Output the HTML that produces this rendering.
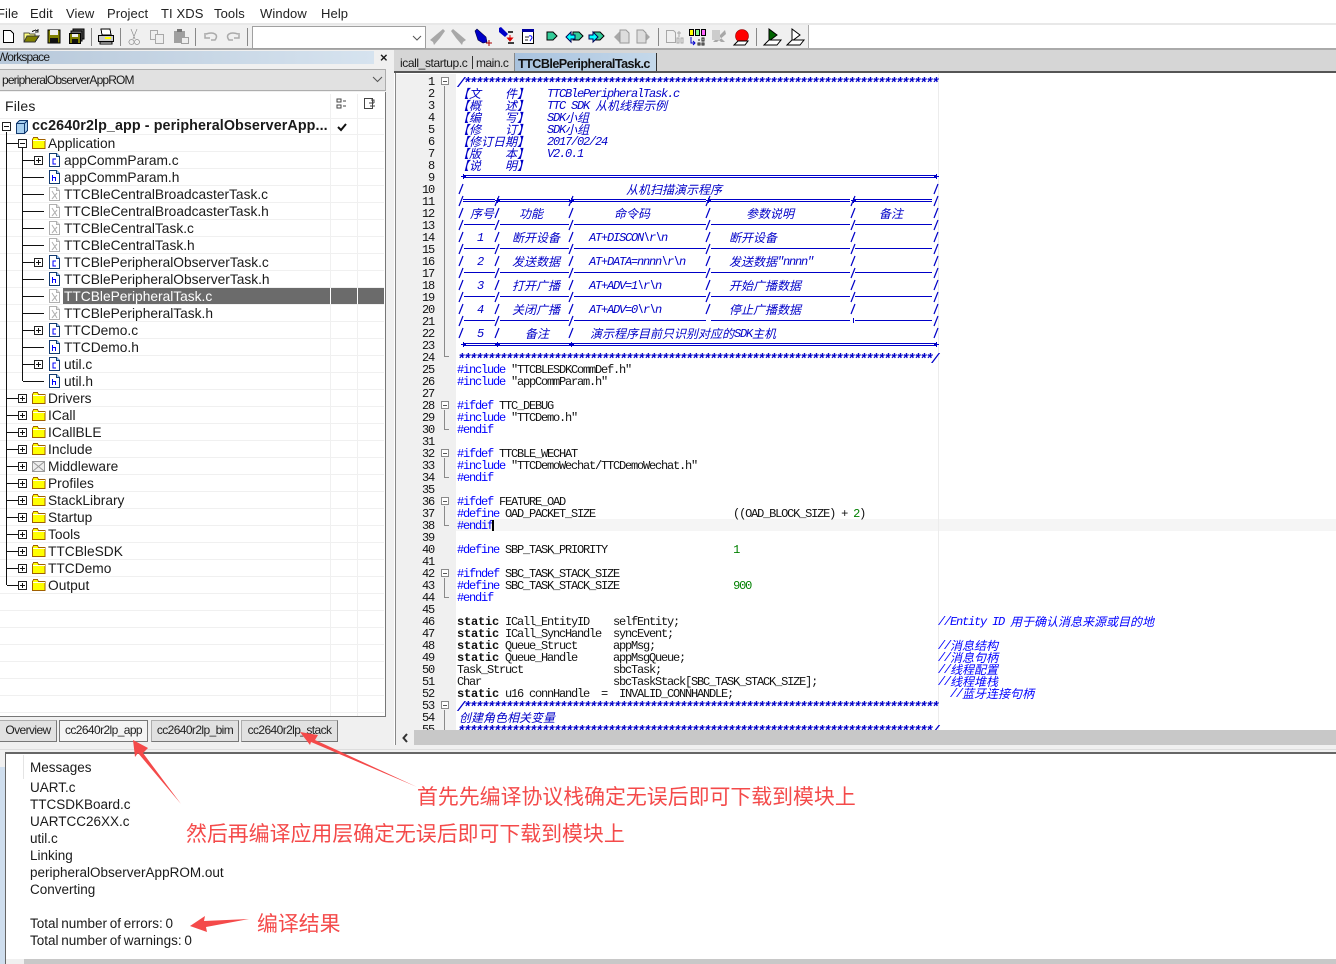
<!DOCTYPE html>
<html><head><meta charset="utf-8"><title>IAR</title>
<style>
html,body{margin:0;padding:0;background:#fff}
#r{position:relative;width:1336px;height:964px;overflow:hidden;background:#fff;font-family:"Liberation Sans",sans-serif;color:#000}
#r div{position:absolute}
.m{position:absolute;top:6px;font-size:13px;line-height:15px;letter-spacing:.1px;color:#222}
.t{position:absolute;font-size:13.750px;line-height:17px;white-space:nowrap;color:#1a1a1a}
.c{font-size:13.500px;word-spacing:-1px}
.h{font-size:12px;letter-spacing:-.85px}
#ed{left:396px;top:76px;width:940px;height:654px;overflow:hidden}
#ed p{position:absolute;margin:0;left:61px;height:12px;line-height:12px;font-family:"Liberation Mono",monospace;font-size:12px;letter-spacing:-1.2px;white-space:pre;color:#111}
#ed p.k{color:#0000c8;font-style:italic;font-weight:bold}
#ed p.s{font-size:14px;letter-spacing:-2.4px;line-height:16px}
#ed p.n{left:0;width:38px;text-align:right;color:#111}
#ed em{font-style:normal;color:#00f}
#ed b{font-weight:bold;letter-spacing:-.2px}
#ed i{font-style:normal;color:#008000}
#ed span{position:absolute;top:0;font-family:"WenQuanYi Zen Hei","Noto Sans CJK SC",sans-serif;font-style:italic;font-weight:normal;letter-spacing:0;font-size:12px;line-height:12px;color:#0000c8;white-space:pre}
#ed span.l{font-family:"Liberation Mono",monospace;letter-spacing:-1.2px}
#ed span.g{color:#00f}
.x{position:absolute;font-family:"Noto Sans CJK SC",sans-serif;font-size:20.900px;line-height:26px;color:#f44a4a;white-space:nowrap}
.tb{position:absolute;top:720px;height:20px;background:#e1e1e1;border:1px solid #adadad;border-right-color:#777;border-bottom-color:#777;font-size:12px;line-height:18px;text-align:center;color:#222;box-sizing:content-box;letter-spacing:-.6px}
</style></head><body><div id="r">

<span class="m" style="left:-3px">File</span><span class="m" style="left:30px">Edit</span><span class="m" style="left:66px">View</span><span class="m" style="left:107px">Project</span><span class="m" style="left:161px">TI XDS</span><span class="m" style="left:214px">Tools</span><span class="m" style="left:260px">Window</span><span class="m" style="left:321px">Help</span>

<div style="left:0;top:23px;width:1336px;height:2px;background:#e8e8e8"></div>
<div style="left:0;top:25px;width:808px;height:23px;background:#f0f0f0;border-right:1px solid #aaa"></div>
<div style="left:0;top:48px;width:1336px;height:2px;background:#aaa"></div>
<div style="left:252px;top:26px;width:172px;height:21px;background:#fff;border:1px solid #a0a0a0"></div>

<svg style="position:absolute;left:0;top:0" width="1336" height="50" viewBox="0 0 1336 50" shape-rendering="crispEdges">
<g fill="none" stroke="#888"><path d="M91.500 28V46M120.500 28V46M195.500 28V46M247.500 28V46M658.500 28V46M756.500 28V46"/></g>
<!-- new -->
<path d="M3.500 30.500H10.500L13.500 33.500V42.500H3.500Z" fill="#fff" stroke="#000"/>
<!-- open -->
<path d="M24 33h5l1 1h5v8H24Z" fill="#ffff80" stroke="#554"/><path d="M24 42l3-6h12l-4 6Z" fill="#808000" stroke="#333"/><path d="M32 32q3-3 6-1M38 29v3h-3" stroke="#222" fill="none"/>
<!-- save -->
<path d="M48 30h12v13H48Z" fill="#808000" stroke="#000"/><path d="M50 30h8v5h-8Z" fill="#eee"/><path d="M50 38h8v5h-8Z" fill="#111"/>
<!-- save all -->
<path d="M73 29h11v10H73Z" fill="#555" stroke="#000"/><path d="M71 31h11v10H71Z" fill="#666" stroke="#000"/><path d="M69.500 33.500h11v10h-11Z" fill="#808000" stroke="#000"/><path d="M72 34h6v3h-6Z" fill="#eee"/><path d="M72 39h6v4h-6Z" fill="#111"/>
<!-- print -->
<path d="M101 29h9l1 6h-9Z" fill="#fff" stroke="#000"/><path d="M98.500 35.500h15v6h-15Z" fill="#ccc" stroke="#000"/><path d="M100 42h12v2h-12Z" fill="#fff" stroke="#000"/><path d="M105 37h6v2h-6Z" fill="#ff0"/>
<!-- cut -->
<g stroke="#a8a8a8" fill="none"><path d="M131 29l4 10M137 29l-4 10"/><circle cx="131.500" cy="42" r="2.500"/><circle cx="137" cy="42" r="2.500"/></g>
<!-- copy -->
<g stroke="#a8a8a8" fill="#eee"><path d="M150.500 30.500h7v9h-7Z"/><path d="M155.500 34.500h8v9h-8Z"/></g>
<!-- paste -->
<path d="M174 31h11v12h-11Z" fill="#a0a0a0"/><path d="M177 29h5v3h-5Z" fill="#777"/><path d="M181.500 37.500h7v6h-7Z" fill="#eee" stroke="#a0a0a0"/>
<!-- undo redo -->
<g fill="none" stroke="#aaa" stroke-width="1.500" shape-rendering="auto"><path d="M206 34q6-2 9 0t0 6h-4M205 33v5h5"/><path d="M238 34q-6-2-9 0t0 6h4M239 33v5h-5"/></g>
<!-- combo arrow -->
<path d="M413 36l4 4 4-4" fill="none" stroke="#555" shape-rendering="auto"/>
<g shape-rendering="auto">
<!-- dim marks -->
<g fill="#a8a8a8"><path d="M430 40l7-6 6-5 2 2-5 7-6 7-1-3-3-2Z"/><path d="M466 40l-7-6-6-5-2 2 5 7 6 7 1-3 3-2Z"/></g>
<!-- blue marks -->
<path d="M475 31l2-2 9 8 1 5-4 1-5-3-2-6Z" fill="#0000c8" stroke="#004" stroke-width=".6"/><path d="M486 43h6M489 40v6" stroke="#a00" stroke-width="1"/>
<path d="M499 28l2-1 7 7-3 3-6-5Z" fill="#0000c8"/><path d="M508 32h5M508 43h6" stroke="#000" stroke-width="1.600"/><path d="M510 35v5M507.500 38l2.500 3 2.500-3Z" stroke="#d00" fill="#d00"/>
<!-- bookmark doc -->
<path d="M522.500 29.500h11v14h-11Z" fill="#fff" stroke="#000"/><path d="M522 29h12v3h-12Z" fill="#0000a0"/><path d="M525 37h4M525 40h3" stroke="#222"/><path d="M529 36q3-1 3 2l-2 3" fill="none" stroke="#00f"/>
<!-- tag arrows -->
<path d="M547 32h6l4 4-4 4h-6Z" fill="#3c9" stroke="#000"/>
<path d="M573 32h6l4 4-4 4h-6Z" fill="#3c9" stroke="#000"/><path d="M566 37l5-5v3h4v4h-4v3Z" fill="#0ff" stroke="#005"/>
<path d="M594 32h6l4 4-4 4h-6Z" fill="#3c9" stroke="#000"/><path d="M598 37l-5-5v3h-4v4h4v3Z" fill="#0ff" stroke="#005"/>
<!-- dim tag -->
<g fill="#a8a8a8"><path d="M614 37l6-6v12Z"/><path d="M620 30h6l3 3v10h-9Z" stroke="#999" fill="#ddd"/><path d="M650 37l-6-6v12Z"/><path d="M637 30h6l3 3v10h-9Z" stroke="#999" fill="#ddd"/></g>
<!-- build icons -->
<g fill="none" stroke="#a8a8a8"><path d="M666.500 30.500h7l2 2v10h-9Z"/><path d="M677 33h4M679 31v6M677 38h2v5h-2ZM681 38h2v5h-2Z"/></g>
<path d="M689.500 29.500h4v6h-4Z" fill="#ff0" stroke="#000"/><path d="M695.500 29.500h4v6h-4Z" fill="#8f8" stroke="#000"/><path d="M701.500 29.500h4v6h-4Z" fill="#f6f" stroke="#000"/><path d="M691 37v6h4M693 41l2 2-2 2" stroke="#00c" fill="none"/><path d="M698 40h2M702 38h2v3h-2ZM698 43h2v2h-2ZM702 43h2v2h-2Z" stroke="#222" fill="none"/>
<g fill="#a8a8a8"><path d="M713 30l12 12h-4l-9-8ZM725 30l-12 12h4l9-8Z"/><path d="M712 30h8v10h-8Z" fill="#ccc"/></g>
<circle cx="742" cy="36" r="6.500" fill="#f00" stroke="#800" stroke-width=".6"/><path d="M734 45l4-4h10l-3 4Z" fill="#fff" stroke="#000"/>
<path d="M769 29v12l8-6Z" fill="#006400" stroke="#000"/><path d="M764 45l5-5h9l3 0-4 5Z" fill="#fff" stroke="#000"/>
<path d="M792 29v12l8-6Z" fill="#fff" stroke="#000"/><path d="M787 45l5-5h9l3 0-4 5Z" fill="#fff" stroke="#000"/>
</g>
</svg>

<!-- workspace -->
<div style="left:0;top:50px;width:394px;height:703px;background:#f0f0f0"></div>
<div style="left:0;top:51px;width:374px;height:13px;background:linear-gradient(90deg,#b7c8da,#d6e3ef)"></div>
<span class="t h" style="left:-3px;top:49px">Workspace</span>
<span class="t" style="left:380px;top:49px;font-size:13px;font-weight:bold">×</span>
<div style="left:0;top:69px;width:385px;height:20px;background:#e1e1e1;border:1px solid #adadad;border-left:0"></div>
<span class="t h" style="left:2px;top:72px">peripheralObserverAppROM</span>
<svg style="position:absolute;left:372px;top:76px" width="12" height="8"><path d="M1 1l4.500 4.500L10 1" fill="none" stroke="#555"/></svg>
<div style="left:0;top:92px;width:385px;height:624px;background:#fff;border-right:1px solid #777;border-bottom:1px solid #777"></div>

<svg style="position:absolute;left:0;top:90px" width="386" height="628" viewBox="0 90 386 628" shape-rendering="crispEdges">
<defs>
<symbol id="fo" width="16" height="14" viewBox="0 0 16 14"><path d="M1.500 3.500l1-2h4l1 2h6.500v9H1.500Z" fill="#ff0" stroke="#a06000"/><path d="M2 4h12v1H2Z" fill="#ffe"/></symbol>
<symbol id="mw" width="16" height="14" viewBox="0 0 16 14"><path d="M1.500 2.500h12v10h-12Z" fill="#eee" stroke="#999"/><path d="M2 3l11 9M13 3L2 12" stroke="#999" shape-rendering="auto"/></symbol>
<symbol id="fc" width="12" height="14" viewBox="0 0 12 14"><path d="M.5.5h7l3 3v10H.500Z" fill="#fff" stroke="#123a70"/><path d="M7.500.5v3h3" fill="#9cf" stroke="#123a70"/><path d="M7 6H4v5h3" fill="none" stroke="#00f"/></symbol>
<symbol id="fh" width="12" height="14" viewBox="0 0 12 14"><path d="M.5.5h7l3 3v10H.500Z" fill="#fff" stroke="#123a70"/><path d="M7.500.5v3h3" fill="#9cf" stroke="#123a70"/><path d="M3.500 5v6M3.500 7.500h3v3.500" fill="none" stroke="#00f"/></symbol>
<symbol id="fx" width="12" height="14" viewBox="0 0 12 14"><path d="M.5.5h7l3 3v10H.500Z" fill="#fff" stroke="#b0b0b0"/><path d="M7.500.5v3h3" fill="#ddd" stroke="#b0b0b0"/><path d="M3 4l5 8M8 6l-5 6" stroke="#b0b0b0" fill="none" shape-rendering="auto"/></symbol>
<symbol id="pl" width="9" height="9" viewBox="0 0 9 9"><path d="M.5.5h8v8h-8Z" fill="#fff" stroke="#222"/><path d="M2 4.500h5M4.500 2v5" stroke="#111"/></symbol>
<symbol id="mi" width="9" height="9" viewBox="0 0 9 9"><path d="M.5.5h8v8h-8Z" fill="#fff" stroke="#222"/><path d="M2 4.500h5" stroke="#111"/></symbol>
</defs>
<!-- grid -->
<g stroke="#f0f0f0"><path d="M0 118.500H384M0 134.500H384M0 151.500H384M0 168.500H384M0 185.500H384M0 202.500H384M0 219.500H384M0 236.500H384M0 253.500H384M0 270.500H384M0 287.500H384M0 304.500H384M0 321.500H384M0 338.500H384M0 355.500H384M0 372.500H384M0 389.500H384M0 406.500H384M0 423.500H384M0 440.500H384M0 457.500H384M0 474.500H384M0 491.500H384M0 508.500H384M0 525.500H384M0 542.500H384M0 559.500H384M0 576.500H384M0 593.500H384M0 610.500H384M0 627.500H384M0 644.500H384M0 661.500H384M0 678.500H384M0 695.500H384M0 712.500H384"/><path d="M330.500 94V716M357.500 94V716"/></g>
<rect x="63" y="288" width="321" height="16" fill="#6b6b6b"/><path d="M330.500 288v16M357.500 288v16" stroke="#fff"/>
<!-- lines -->
<g stroke="#111">
<path d="M6.500 132V585M22.500 148V381"/>
<path d="M7 143.500H18M7 398.500H18M7 415.500H18M7 432.500H18M7 449.500H18M7 466.500H18M7 483.500H18M7 500.500H18M7 517.500H18M7 534.500H18M7 551.500H18M7 568.500H18M7 585.500H18"/>
<path d="M23 160.500H34M23 177.500H44M23 194.500H44M23 211.500H44M23 228.500H44M23 245.500H44M23 262.500H34M23 279.500H44M23 296.500H44M23 313.500H44M23 330.500H34M23 347.500H44M23 364.500H34M23 381.500H44"/>
</g>
<use href="#mi" x="2" y="122"/>
<path d="M16.500 123.500l3-3h8v10l-3 3h-8Z" fill="#a8d0f0" stroke="#123a70"/><path d="M16.500 123.500h8v10M24.500 123.500l3-3" fill="none" stroke="#123a70"/>
<use href="#mi" x="18" y="139"/><use href="#fo" x="31" y="136"/>
<use href="#pl" x="34" y="156"/><use href="#fc" x="49" y="153"/>
<use href="#fh" x="49" y="170"/><use href="#fx" x="49" y="187"/><use href="#fx" x="49" y="204"/><use href="#fx" x="49" y="221"/><use href="#fx" x="49" y="238"/>
<use href="#pl" x="34" y="258"/><use href="#fc" x="49" y="255"/><use href="#fh" x="49" y="272"/><use href="#fx" x="49" y="289"/><use href="#fx" x="49" y="306"/>
<use href="#pl" x="34" y="326"/><use href="#fc" x="49" y="323"/><use href="#fh" x="49" y="340"/>
<use href="#pl" x="34" y="360"/><use href="#fc" x="49" y="357"/><use href="#fh" x="49" y="374"/>
<use href="#pl" x="18" y="394"/><use href="#fo" x="31" y="391"/>
<use href="#pl" x="18" y="411"/><use href="#fo" x="31" y="408"/>
<use href="#pl" x="18" y="428"/><use href="#fo" x="31" y="425"/>
<use href="#pl" x="18" y="445"/><use href="#fo" x="31" y="442"/>
<use href="#pl" x="18" y="462"/><use href="#mw" x="31" y="459"/>
<use href="#pl" x="18" y="479"/><use href="#fo" x="31" y="476"/>
<use href="#pl" x="18" y="496"/><use href="#fo" x="31" y="493"/>
<use href="#pl" x="18" y="513"/><use href="#fo" x="31" y="510"/>
<use href="#pl" x="18" y="530"/><use href="#fo" x="31" y="527"/>
<use href="#pl" x="18" y="547"/><use href="#fo" x="31" y="544"/>
<use href="#pl" x="18" y="564"/><use href="#fo" x="31" y="561"/>
<use href="#pl" x="18" y="581"/><use href="#fo" x="31" y="578"/>
<!-- header icons -->
<g stroke="#444" fill="none"><path d="M337 99h4v3h-4ZM337 105h4v3h-4ZM343 101h3M343 106h3"/><path d="M364.500 98.500h8v10h-8Z"/><path d="M369 103h5M371 100h3v3M370 106h2M373 106h2"/></g>
<path d="M338 127l3 3 5-6" fill="none" stroke="#111" stroke-width="2" shape-rendering="auto"/>
</svg>

<span class="t" style="left:5px;top:98px;font-size:14px;letter-spacing:.2px">Files</span>
<span class="t" style="left:32px;top:118px;font-size:14.300px;font-weight:bold;letter-spacing:.1px">cc2640r2lp_app - peripheralObserverApp...</span>
<span class="t" style="left:48px;top:135px">Application</span>
<span class="t" style="left:64px;top:152px">appCommParam.c</span>
<span class="t" style="left:64px;top:169px">appCommParam.h</span>
<span class="t" style="left:64px;top:186px">TTCBleCentralBroadcasterTask.c</span>
<span class="t" style="left:64px;top:203px">TTCBleCentralBroadcasterTask.h</span>
<span class="t" style="left:64px;top:220px">TTCBleCentralTask.c</span>
<span class="t" style="left:64px;top:237px">TTCBleCentralTask.h</span>
<span class="t" style="left:64px;top:254px">TTCBlePeripheralObserverTask.c</span>
<span class="t" style="left:64px;top:271px">TTCBlePeripheralObserverTask.h</span>
<span class="t" style="left:64px;top:288px;color:#fff">TTCBlePeripheralTask.c</span>
<span class="t" style="left:64px;top:305px">TTCBlePeripheralTask.h</span>
<span class="t" style="left:64px;top:322px">TTCDemo.c</span>
<span class="t" style="left:64px;top:339px">TTCDemo.h</span>
<span class="t" style="left:64px;top:356px">util.c</span>
<span class="t" style="left:64px;top:373px">util.h</span>
<span class="t" style="left:48px;top:390px">Drivers</span>
<span class="t" style="left:48px;top:407px">ICall</span>
<span class="t" style="left:48px;top:424px">ICallBLE</span>
<span class="t" style="left:48px;top:441px">Include</span>
<span class="t" style="left:48px;top:458px">Middleware</span>
<span class="t" style="left:48px;top:475px">Profiles</span>
<span class="t" style="left:48px;top:492px">StackLibrary</span>
<span class="t" style="left:48px;top:509px">Startup</span>
<span class="t" style="left:48px;top:526px">Tools</span>
<span class="t" style="left:48px;top:543px">TTCBleSDK</span>
<span class="t" style="left:48px;top:560px">TTCDemo</span>
<span class="t" style="left:48px;top:577px">Output</span>

<!-- bottom tabs -->
<div class="tb" style="left:-1px;width:56px">Overview</div>
<div class="tb" style="left:59px;width:87px;background:#f4f4f4;border-color:#777">cc2640r2lp_app</div>
<div class="tb" style="left:151px;width:86px">cc2640r2lp_bim</div>
<div class="tb" style="left:241px;width:95px">cc2640r2lp_stack</div>

<!-- right pane -->
<div style="left:394px;top:50px;width:942px;height:22px;background:#d6d6d6"></div>
<div style="left:394px;top:71px;width:942px;height:2px;background:#555"></div>
<div style="left:514px;top:53px;width:141px;height:18px;background:linear-gradient(90deg,#a8c2de,#c4d8ea);border-right:1px solid #333;border-left:1px solid #888"></div>
<span class="t" style="left:400px;top:55px;font-size:12px;letter-spacing:-.4px">icall_startup.c</span>
<div style="left:472px;top:56px;width:1px;height:13px;background:#333"></div>
<span class="t" style="left:476px;top:55px;font-size:12px;letter-spacing:-.5px">main.c</span>
<span class="t" style="left:518px;top:56px;font-size:12.600px;font-weight:bold;letter-spacing:-.55px;color:#111">TTCBlePeripheralTask.c</span>
<div style="left:395px;top:73px;width:1px;height:672px;background:#888"></div>
<div style="left:396px;top:74px;width:60px;height:656px;background:#f0f0f0"></div>
<div style="left:456px;top:519px;width:880px;height:12px;background:#f5f5f5"></div>
<div style="left:938px;top:74px;width:1px;height:656px;background:#ececec"></div>

<svg style="position:absolute;left:396px;top:74px" width="62" height="656" viewBox="396 74 62 656" shape-rendering="crispEdges">
<g stroke="#8a8a8a" fill="none">
<path d="M444.500 86V356.500H449"/><path d="M444.500 410V429.500H449"/><path d="M444.500 458V477.500H449"/><path d="M444.500 506V525.500H449"/><path d="M444.500 578V597.500H449"/><path d="M444.500 710V730"/>
</g>
<g stroke="#8a8a8a" fill="#fff"><path d="M441.500 77.500h7v7h-7Z"/><path d="M441.500 401.500h7v7h-7Z"/><path d="M441.500 449.500h7v7h-7Z"/><path d="M441.500 497.500h7v7h-7Z"/><path d="M441.500 569.500h7v7h-7Z"/><path d="M441.500 701.500h7v7h-7Z"/></g>
<g stroke="#555"><path d="M443 81.500h4M443 405.500h4M443 453.500h4M443 501.500h4M443 573.500h4M443 705.500h4"/></g>
</svg>

<div id="ed">
<p class="n" style="top:0">1</p><p class="n" style="top:12px">2</p><p class="n" style="top:24px">3</p><p class="n" style="top:36px">4</p><p class="n" style="top:48px">5</p><p class="n" style="top:60px">6</p><p class="n" style="top:72px">7</p><p class="n" style="top:84px">8</p><p class="n" style="top:96px">9</p><p class="n" style="top:108px">10</p><p class="n" style="top:120px">11</p><p class="n" style="top:132px">12</p><p class="n" style="top:144px">13</p><p class="n" style="top:156px">14</p><p class="n" style="top:168px">15</p><p class="n" style="top:180px">16</p><p class="n" style="top:192px">17</p><p class="n" style="top:204px">18</p><p class="n" style="top:216px">19</p><p class="n" style="top:228px">20</p><p class="n" style="top:240px">21</p><p class="n" style="top:252px">22</p><p class="n" style="top:264px">23</p><p class="n" style="top:276px">24</p><p class="n" style="top:288px">25</p><p class="n" style="top:300px">26</p><p class="n" style="top:312px">27</p><p class="n" style="top:324px">28</p><p class="n" style="top:336px">29</p><p class="n" style="top:348px">30</p><p class="n" style="top:360px">31</p><p class="n" style="top:372px">32</p><p class="n" style="top:384px">33</p><p class="n" style="top:396px">34</p><p class="n" style="top:408px">35</p><p class="n" style="top:420px">36</p><p class="n" style="top:432px">37</p><p class="n" style="top:444px">38</p><p class="n" style="top:456px">39</p><p class="n" style="top:468px">40</p><p class="n" style="top:480px">41</p><p class="n" style="top:492px">42</p><p class="n" style="top:504px">43</p><p class="n" style="top:516px">44</p><p class="n" style="top:528px">45</p><p class="n" style="top:540px">46</p><p class="n" style="top:552px">47</p><p class="n" style="top:564px">48</p><p class="n" style="top:576px">49</p><p class="n" style="top:588px">50</p><p class="n" style="top:600px">51</p><p class="n" style="top:612px">52</p><p class="n" style="top:624px">53</p><p class="n" style="top:636px">54</p><p class="n" style="top:648px">55</p>

<p class="k s" style="top:0">/*******************************************************************************</p>
<p class="k" style="top:12px"><span>【文&#12288;&#12288;件】</span><span class="l" style="left:90px">TTCBlePeripheralTask.c</span></p>
<p class="k" style="top:24px"><span>【概&#12288;&#12288;述】</span><span class="l" style="left:90px">TTC SDK</span><span style="left:138px">从机线程示例</span></p>
<p class="k" style="top:36px"><span>【编&#12288;&#12288;写】</span><span class="l" style="left:90px">SDK</span><span style="left:108px">小组</span></p>
<p class="k" style="top:48px"><span>【修&#12288;&#12288;订】</span><span class="l" style="left:90px">SDK</span><span style="left:108px">小组</span></p>
<p class="k" style="top:60px"><span>【修订日期】</span><span class="l" style="left:90px">2017/02/24</span></p>
<p class="k" style="top:72px"><span>【版&#12288;&#12288;本】</span><span class="l" style="left:90px">V2.0.1</span></p>
<p class="k" style="top:84px"><span>【说&#12288;&#12288;明】</span></p>
<p class="k" style="top:108px"><span style="left:169px">从机扫描演示程序</span></p>
<p class="k" style="top:132px"><span style="left:13px">序号</span><span style="left:62px">功能</span><span style="left:157px">命令码</span><span style="left:289px">参数说明</span><span style="left:422px">备注</span></p>
<p class="k" style="top:156px"><span class="l" style="left:20px">1</span><span style="left:55px">断开设备</span><span class="l" style="left:132px">AT+DISCON\r\n</span><span style="left:272px">断开设备</span></p>
<p class="k" style="top:180px"><span class="l" style="left:20px">2</span><span style="left:55px">发送数据</span><span class="l" style="left:132px">AT+DATA=nnnn\r\n</span><span style="left:272px">发送数据</span><span class="l" style="left:320px">"nnnn"</span></p>
<p class="k" style="top:204px"><span class="l" style="left:20px">3</span><span style="left:55px">打开广播</span><span class="l" style="left:132px">AT+ADV=1\r\n</span><span style="left:272px">开始广播数据</span></p>
<p class="k" style="top:228px"><span class="l" style="left:20px">4</span><span style="left:55px">关闭广播</span><span class="l" style="left:132px">AT+ADV=0\r\n</span><span style="left:272px">停止广播数据</span></p>
<p class="k" style="top:252px"><span class="l" style="left:20px">5</span><span style="left:68px">备注</span><span style="left:133px">演示程序目前只识别对应的</span><span class="l" style="left:277px">SDK</span><span style="left:295px">主机</span></p>
<p class="k s" style="top:276px">*******************************************************************************/</p>
<p style="top:288px"><em>#include</em> "TTCBLESDKCommDef.h"</p>
<p style="top:300px"><em>#include</em> "appCommParam.h"</p>
<p style="top:324px"><em>#ifdef</em> TTC_DEBUG</p>
<p style="top:336px"><em>#include</em> "TTCDemo.h"</p>
<p style="top:348px"><em>#endif</em></p>
<p style="top:372px"><em>#ifdef</em> TTCBLE_WECHAT</p>
<p style="top:384px"><em>#include</em> "TTCDemoWechat/TTCDemoWechat.h"</p>
<p style="top:396px"><em>#endif</em></p>
<p style="top:420px"><em>#ifdef</em> FEATURE_OAD</p>
<p style="top:432px"><em>#define</em> OAD_PACKET_SIZE                       ((OAD_BLOCK_SIZE) + <i>2</i>)</p>
<p style="top:444px"><em>#endif</em></p>
<p style="top:468px"><em>#define</em> SBP_TASK_PRIORITY                     <i>1</i></p>
<p style="top:492px"><em>#ifndef</em> SBC_TASK_STACK_SIZE</p>
<p style="top:504px"><em>#define</em> SBC_TASK_STACK_SIZE                   <i>900</i></p>
<p style="top:516px"><em>#endif</em></p>
<p style="top:540px"><b>static</b> ICall_EntityID    selfEntity;<span class="l g" style="left:481px">//Entity ID</span><span class="g" style="left:553px">用于确认消息来源或目的地</span></p>
<p style="top:552px"><b>static</b> ICall_SyncHandle  syncEvent;</p>
<p style="top:564px"><b>static</b> Queue_Struct      appMsg;<span class="l g" style="left:481px">//</span><span class="g" style="left:493px">消息结构</span></p>
<p style="top:576px"><b>static</b> Queue_Handle      appMsgQueue;<span class="l g" style="left:481px">//</span><span class="g" style="left:493px">消息句柄</span></p>
<p style="top:588px">Task_Struct               sbcTask;<span class="l g" style="left:481px">//</span><span class="g" style="left:493px">线程配置</span></p>
<p style="top:600px">Char                      sbcTaskStack[SBC_TASK_STACK_SIZE];<span class="l g" style="left:481px">//</span><span class="g" style="left:493px">线程堆栈</span></p>
<p style="top:612px"><b>static</b> u16 connHandle  =  INVALID_CONNHANDLE;<span class="l g" style="left:493px">//</span><span class="g" style="left:505px">蓝牙连接句柄</span></p>
<p class="k s" style="top:624px">/*******************************************************************************</p>
<p class="k" style="top:636px"><span style="left:2px">创建角色相关变量</span></p>
<p class="k s" style="top:648px">*******************************************************************************/</p>
</div>
<div style="left:492px;top:520px;width:2px;height:11px;background:#000"></div>

<!-- comment box table -->
<svg style="position:absolute;left:456px;top:170px" width="486" height="182" viewBox="456 170 486 182" shape-rendering="crispEdges">
<g stroke="#0000c8" fill="none">
<path d="M463 175.500H936M463 177.500H936M463 343.500H936M463 345.500H936"/>
<path d="M463 199.500H495M463 201.500H495M498 199.500H570M498 201.500H570M572 199.500H706M572 201.500H706M709 199.500H850M709 201.500H850M854 199.500H932M854 201.500H932"/>
<path d="M464 224.500H495M500 224.500H569M574 224.500H706M711 224.500H850M855 224.500H932"/>
<path d="M464 248.500H495M500 248.500H569M574 248.500H706M711 248.500H850M855 248.500H932"/>
<path d="M464 272.500H495M500 272.500H569M574 272.500H706M711 272.500H850M855 272.500H932"/>
<path d="M464 296.500H495M500 296.500H569M574 296.500H706M711 296.500H850M855 296.500H932"/>
<path d="M464 320.500H495M500 320.500H569M574 320.500H706M711 320.500H850M855 320.500H932"/>
<!-- junction crosses -->
<path d="M463.500 174v5M936.500 174v5M461 176.500h5M934 176.500h5M463.500 342v5M936.500 342v5M461 344.500h5M934 344.500h5"/>
<path d="M497.500 198v5M571.500 198v5M708.500 198v5M853.500 198v5M495 200.500h5M569 200.500h5M706 200.500h5M851 200.500h5"/>
<path d="M497.500 342v5M571.500 342v5M495 344.500h5M569 344.500h5M853.500 318v5"/>
</g>
<g stroke="#0000c8" fill="none" stroke-width="1.200" shape-rendering="auto">
<path d="M459 194l4-10m-4 22l4-10m-4 22l4-10m-4 22l4-10m-4 22l4-10m-4 22l4-10m-4 22l4-10m-4 22l4-10m-4 22l4-10m-4 22l4-10m-4 22l4-10m-4 22l4-10m-4 22l4-10"/>
<path d="M934 194l4-10m-4 22l4-10m-4 22l4-10m-4 22l4-10m-4 22l4-10m-4 22l4-10m-4 22l4-10m-4 22l4-10m-4 22l4-10m-4 22l4-10m-4 22l4-10m-4 22l4-10m-4 22l4-10"/>
<path d="M495 206l4-10m-4 22l4-10m-4 22l4-10m-4 22l4-10m-4 22l4-10m-4 22l4-10m-4 22l4-10m-4 22l4-10m-4 22l4-10m-4 22l4-10m-4 22l4-10m-4 22l4-10"/>
<path d="M569 206l4-10m-4 22l4-10m-4 22l4-10m-4 22l4-10m-4 22l4-10m-4 22l4-10m-4 22l4-10m-4 22l4-10m-4 22l4-10m-4 22l4-10m-4 22l4-10m-4 22l4-10"/>
<path d="M706 206l4-10m-4 22l4-10m-4 22l4-10m-4 22l4-10m-4 22l4-10m-4 22l4-10m-4 22l4-10m-4 22l4-10m-4 22l4-10m-4 22l4-10"/>
<path d="M851 206l4-10m-4 22l4-10m-4 22l4-10m-4 22l4-10m-4 22l4-10m-4 22l4-10m-4 22l4-10m-4 22l4-10m-4 22l4-10m-4 22l4-10"/>
</g>
</svg>

<!-- h scrollbar -->
<div style="left:396px;top:730px;width:940px;height:15px;background:#f0f0f0"></div>
<div style="left:414px;top:730px;width:922px;height:15px;background:#c8c8c8"></div>
<svg style="position:absolute;left:401px;top:733px" width="10" height="10"><path d="M6 1L2.500 5 6 9" fill="none" stroke="#333" stroke-width="2"/></svg>
<div style="left:394px;top:745px;width:942px;height:8px;background:#f0f0f0"></div>
<div style="left:0;top:749px;width:1336px;height:1px;background:#ddd"></div>
<div style="left:5px;top:752px;width:1331px;height:2px;background:#666"></div>

<!-- messages -->
<div style="left:0;top:752px;width:5px;height:15px;background:#f0f0f0"></div>
<div style="left:0;top:767px;width:5px;height:197px;background:#cfdeee"></div>
<div style="left:5px;top:754px;width:1px;height:210px;background:#666"></div>
<div style="left:23px;top:755px;width:1px;height:24px;background:#e4e4e4"></div>
<span class="t c" style="left:30px;top:759px">Messages</span>
<span class="t c" style="left:30px;top:779px">UART.c</span>
<span class="t c" style="left:30px;top:796px">TTCSDKBoard.c</span>
<span class="t c" style="left:30px;top:813px">UARTCC26XX.c</span>
<span class="t c" style="left:30px;top:830px">util.c</span>
<span class="t c" style="left:30px;top:847px">Linking</span>
<span class="t c" style="left:30px;top:864px">peripheralObserverAppROM.out</span>
<span class="t c" style="left:30px;top:881px">Converting</span>
<span class="t c" style="left:30px;top:915px">Total number of errors: 0</span>
<span class="t c" style="left:30px;top:932px">Total number of warnings: 0</span>
<div style="left:6px;top:959px;width:18px;height:5px;background:#f0f0f0"></div>
<div style="left:24px;top:959px;width:1312px;height:5px;background:#c8c8c8"></div>

<!-- annotations -->
<svg style="position:absolute;left:0;top:720px" width="450" height="230" viewBox="0 720 450 230">
<g fill="#f44a4a">
<path d="M133 740L148 748L143 753L181 804L138 753L135 757Z"/>
<path d="M300 732L318 735L315 740L417 787L311 742L310 745Z"/>
<path d="M190 926L205 916L204 921L249 919L206 927L207 932Z"/>
</g>
</svg>
<span class="x" style="left:417px;top:783px">首先先编译协议栈确定无误后即可下载到模块上</span>
<span class="x" style="left:186px;top:820px">然后再编译应用层确定无误后即可下载到模块上</span>
<span class="x" style="left:257px;top:910px">编译结果</span>
</div></body></html>
